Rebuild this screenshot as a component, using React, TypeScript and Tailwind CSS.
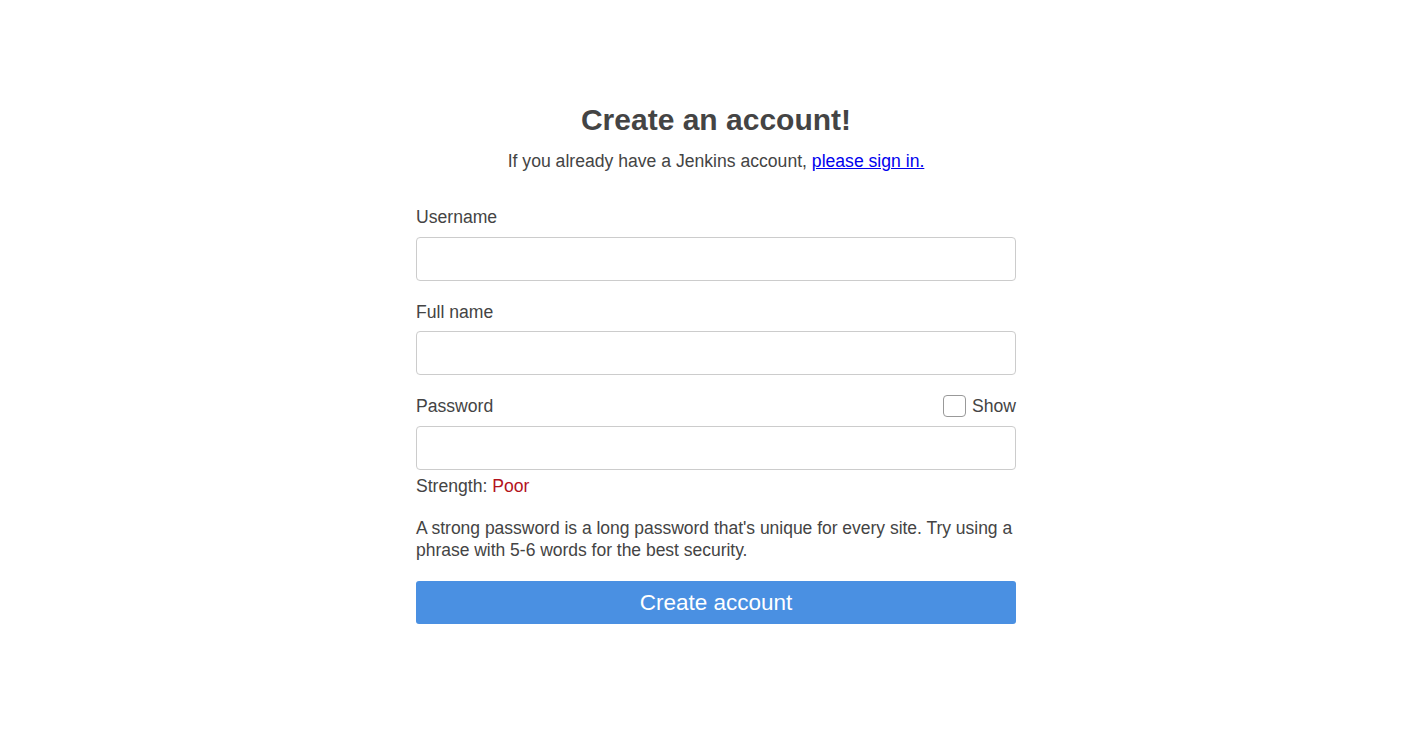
import React from "react";

export default function App() {
  return (
    <div className="min-h-[756px] w-full bg-white font-['Liberation_Sans',Arial,sans-serif] text-[#444]">
      <div className="flex justify-center pl-[9px] pt-[101px]">
        <div className="w-[600px]">
          <h1 className="text-center text-[30px] font-bold leading-[38px] text-[#444]">Create an account!</h1>
          <p className="mt-[11px] text-center text-[17.6px] leading-[22px]">
            If you already have a Jenkins account,{" "}
            <a href="#" className="text-[#0000ee] underline">please sign in.</a>
          </p>
          <div className="mt-[34px]">
            <label className="block text-[17.6px] leading-[22px]">Username</label>
            <input className="mt-[9px] block h-[44px] w-full rounded-[4px] border border-[#ccc] bg-white px-3 text-[17.6px] outline-none" />
          </div>
          <div className="mt-[20px]">
            <label className="block text-[17.6px] leading-[22px]">Full name</label>
            <input className="mt-[8px] block h-[44px] w-full rounded-[4px] border border-[#ccc] bg-white px-3 text-[17.6px] outline-none" />
          </div>
          <div className="mt-[20px]">
            <div className="flex items-center justify-between leading-[22px]">
              <label className="text-[17.6px]">Password</label>
              <label className="flex items-center gap-[6px] text-[17.6px]">
                <span className="block h-[22px] w-[23px] rounded-[4px] border border-[#999] bg-white"></span>
                Show
              </label>
            </div>
            <input type="password" className="mt-[9px] block h-[44px] w-full rounded-[4px] border border-[#ccc] bg-white px-3 text-[17.6px] outline-none" />
            <div className="mt-[5px] text-[17.6px] leading-[22px]">
              Strength: <span className="text-[#b3131c]">Poor</span>
            </div>
          </div>
          <p className="mt-[20px] text-[17.5px] leading-[22px] tracking-[-0.02px]">
            A strong password is a long password that's unique for every site. Try using a phrase with 5-6 words for the best security.
          </p>
          <button className="mt-[20px] block h-[43px] w-full rounded-[3px] bg-[#4a90e2] text-[22.5px] leading-[43px] text-white">
            Create account
          </button>
        </div>
      </div>
    </div>
  );
}
